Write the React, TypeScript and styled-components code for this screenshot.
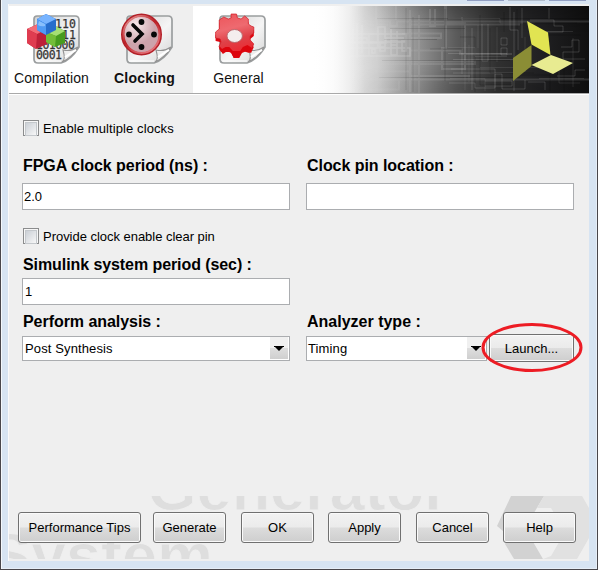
import React from "react";
import styled, { createGlobalStyle } from "styled-components";

const GlobalStyle = createGlobalStyle`
  * { box-sizing: border-box; }
  body { margin: 0; overflow: hidden; background: #d7e4f2; }
`;

const Window = styled.div`
  width: 598px;
  height: 570px;
  display: flex;
  flex-direction: column;
  padding: 4px 8px 8px 7px;
  border: 1px solid #49474b;
  border-top: 0;
  background: #d7e4f2;
  box-shadow: inset 1px 0 #f4f8fc, inset -1px -1px #e6eef7;
  font-family: "Liberation Sans", Arial, sans-serif;
  font-size: 13px;
  color: #000;
  position: relative;
`;

const CaptionButtons = styled.div`
  position: absolute;
  top: 0;
  left: 466px;
  display: flex;
  gap: 4px;
`;
const CaptionEdge = styled.i<{ $tone: string }>`
  width: 37px;
  height: 1px;
  background: ${(p) => p.$tone};
`;

const Client = styled.div`
  flex: 1;
  display: flex;
  flex-direction: column;
  min-height: 0;
  background: #efefef;
  border-left: 1px solid #fafafa;
  overflow: hidden;
`;

const Header = styled.header`
  height: 89px;
  margin-top: 2px;
  flex: none;
  display: flex;
  background: #fff;
  position: relative;
`;
const Tabs = styled.nav`
  display: flex;
  height: 87px;
`;
const Tab = styled.div<{ $width: number; $active?: boolean }>`
  width: ${(p) => p.$width}px;
  height: 87px;
  display: flex;
  flex-direction: column;
  align-items: center;
  padding-top: 7px;
  font-size: 14px;
  line-height: 16px;
  font-weight: ${(p) => (p.$active ? 700 : 400)};
  letter-spacing: ${(p) => (p.$active ? "0.25px" : "0.1px")};
  background: ${(p) => (p.$active ? "#efefef" : "#fff")};
  color: #111;
`;
const TabLabel = styled.span<{ $shift?: number }>`
  margin-right: ${(p) => p.$shift ?? 0}px;
`;
const TabIcon = styled.svg`
  width: 56px;
  height: 54px;
  margin-bottom: 3px;
  overflow: visible;
`;
const BitText = styled.text`
  font: 11.5px "DejaVu Sans Mono", monospace;
  fill: #343434;
  stroke: #343434;
  stroke-width: 0.25px;
`;
const Banner = styled.svg`
  flex: none;
  width: 278px;
  height: 87px;
  margin-left: 26px;
`;
const HeaderRule = styled.div`
  position: absolute;
  left: 0;
  right: 0;
  bottom: 1px;
  height: 1px;
  background: #a9a9a9;
`;

const Form = styled.main`
  flex: none;
  height: 401px;
  display: flex;
  flex-direction: column;
  padding: 25px 15px 0 13px;
`;
const CheckRow = styled.label`
  height: 16px;
  display: flex;
  align-items: center;
  gap: 4px;
  padding-left: 1px;
  line-height: 16px;
`;
const CheckText = styled.span<{ $spacing?: number }>`
  padding-top: 2px;
  letter-spacing: ${(p) => p.$spacing ?? 0}px;
`;
const CheckBox = styled.span`
  width: 16px;
  height: 16px;
  padding: 1px;
  border: 1px solid #8b8c8d;
  background: #f7f7f7;
  &::before {
    content: "";
    display: block;
    height: 12px;
    border: 1px solid #c4c8cc;
    background: linear-gradient(135deg, #cbd0d6, #f7f7f7);
  }
`;
const Fields = styled.div<{ $top: number }>`
  display: grid;
  grid-template-columns: 268px 268px;
  column-gap: 16px;
  margin-top: ${(p) => p.$top}px;
`;
const Field = styled.div<{ $gap: number }>`
  display: flex;
  flex-direction: column;
  gap: ${(p) => p.$gap}px;
`;
const FieldLabel = styled.div<{ $spacing?: number }>`
  height: 18px;
  padding-left: 1px;
  font-size: 16px;
  line-height: 18px;
  font-weight: 700;
  letter-spacing: ${(p) => p.$spacing ?? -0.05}px;
  white-space: nowrap;
`;
const TextBox = styled.div<{ $indent?: number }>`
  height: 27px;
  border: 1px solid #abadb0;
  background: #fff;
  padding-left: ${(p) => p.$indent ?? 1}px;
  line-height: 26px;
`;
const SelectRow = styled.div`
  display: flex;
  align-items: center;
  height: 28px;
  gap: 2px;
`;
const Select = styled.div<{ $width: number; $narrow?: boolean }>`
  width: ${(p) => p.$width}px;
  height: 25px;
  display: flex;
  align-items: center;
  justify-content: space-between;
  padding: 0 1px 0 ${(p) => (p.$narrow ? 1 : 2)}px;
  border: 1px solid #abadb0;
  background: #fff;
  line-height: 23px;
  letter-spacing: 0.12px;
`;
const SelectArrow = styled.svg`
  width: 18px;
  height: 22px;
  background: linear-gradient(#f0f0f0 0 50%, #dedede 51%, #cfcfcf);
`;

const Button = styled.button<{ $width: number; $height: number }>`
  flex: none;
  width: ${(p) => p.$width}px;
  height: ${(p) => p.$height}px;
  padding: ${(p) => (p.$height < 30 ? "1px 0 0" : "0 0 1px")};
  border: 1px solid #707070;
  border-radius: 3px;
  background: linear-gradient(#f2f2f2 0, #ebebeb 48%, #dcdcdc 52%, #cecece 100%);
  box-shadow: inset 0 0 0 1px #fafafa;
  font: 13px "Liberation Sans", Arial, sans-serif;
  color: #000;
  white-space: nowrap;
`;

const Footer = styled.footer`
  flex: 1;
  position: relative;
  display: flex;
  align-items: flex-start;
  padding: 16px 0 0 9px;
  overflow: hidden;
`;
const Watermark = styled.svg`
  position: absolute;
  left: 0;
  top: 0;
  width: 580px;
  height: 63px;
`;
const WatermarkText = styled.text`
  font: 700 63px "Liberation Sans", Arial, sans-serif;
  fill: #dedede;
  stroke: #efefef;
  stroke-width: 0.8px;
`;
const Actions = styled.div`
  position: relative;
  display: grid;
  grid-template-columns: 123px 73px 73px 73px 73px 73px;
  column-gap: 14px;
  & > :nth-child(2) { margin-left: -2px; }
  & > :nth-child(3) { margin-left: -1px; }
  & > :nth-child(4) { margin-left: -1px; }
`;
const Highlight = styled.svg`
  position: absolute;
  left: 479px;
  top: 321px;
  width: 104px;
  height: 53px;
`;

function Page({ id }: { id: string }) {
  return (
    <>
      <defs>
        <linearGradient id={id} x1="0" y1="0" x2="1" y2="1">
          <stop stopColor="#d0d0d0" />
          <stop offset=".55" stopColor="#f5f5f5" />
          <stop offset="1" stopColor="#d2d2d2" />
        </linearGradient>
      </defs>
      <path d="M11 3H49Q53 3 53 7V34Q45 47 35 50H12Q8 50 8 46V6Q8 3 11 3Z" fill={`url(#${id})`} stroke="#9b9e9f" strokeWidth="1.7" />
      <path d="M10 48H35" stroke="#fff" />
      <path d="M36 49Q40 47 37 37Q45 39 52 34Q47 44 36 49Z" fill="#eee" stroke="#929292" strokeWidth="1.1" />
      <path d="M39 44L50 37" stroke="#fff" strokeWidth="2" />
    </>
  );
}

function CompilationIcon() {
  return (
    <TabIcon viewBox="1 0 56 54">
      <Page id="page-bits" />
      <BitText x="29" y="15">110</BitText>
      <BitText x="36" y="26">11</BitText>
      <BitText x="10" y="36" textLength="39">101000</BitText>
      <BitText x="10" y="46" textLength="26">0001</BitText>
      <path d="M1 16L12 11L21 16V31L10 36L1 30Z" fill="#bd2038" />
      <path d="M1 16L12 11L21 16L11 21Z" fill="#f36c77" />
      <path d="M1 16L11 21L10 36L1 30Z" fill="#df3c50" />
      <path d="M20 19L29 13L39 18V30L29 34L20 29Z" fill="#479c1f" />
      <path d="M20 19L29 13L39 18L30 23Z" fill="#a5df74" />
      <path d="M20 19L30 23L29 34L20 29Z" fill="#73bd39" />
      <path d="M11 6L20 1L30 6V17L20 22L11 17Z" fill="#276dcc" />
      <path d="M11 6L20 1L30 6L20 11Z" fill="#78b4ff" />
      <path d="M11 6L20 11V22L11 17Z" fill="#519bf4" />
      <path d="M13 8L19 11V13Q15 14 12 12Z" fill="#a1ceff" opacity=".7" />
    </TabIcon>
  );
}

function ClockIcon() {
  return (
    <TabIcon viewBox="0 0 56 54">
      <defs>
        <radialGradient id="dial" cx=".35" cy=".25">
          <stop stopColor="#f8e9eb" />
          <stop offset="1" stopColor="#cda3ab" />
        </radialGradient>
        <linearGradient id="rim" x1="0" y1="0" x2=".7" y2="1">
          <stop stopColor="#eca9a8" />
          <stop offset=".5" stopColor="#bd2026" />
          <stop offset="1" stopColor="#e6767d" />
        </linearGradient>
      </defs>
      <Page id="page-clock" />
      <ellipse cx="22.5" cy="21.5" rx="19" ry="19.5" fill="url(#dial)" stroke="#b32028" strokeWidth="3" />
      <ellipse cx="22.5" cy="21.5" rx="18" ry="18.5" fill="none" stroke="url(#rim)" strokeWidth="2" />
      <path d="M14 12L23 21L16 28" fill="none" stroke="#080808" strokeWidth="3.6" strokeLinecap="round" />
      <g fill="#080808">
        <circle cx="22.5" cy="9" r="2.9" /><circle cx="35" cy="21.5" r="2.9" />
        <circle cx="22.5" cy="34" r="2.9" /><circle cx="10" cy="21.5" r="2.9" />
      </g>
    </TabIcon>
  );
}

const gearOutline =
  "M17 1H23L24 5L28 6L32 3L36 6L36 11L39 13L42 14V20L38 23L38 27L42 31L39 37L34 35L29 37L26 42H20L17 37L13 35L8 38L4 33L6 29L5 26L0 25V19L4 16L4 12L4 7L9 4L14 6L17 5Z";

function GearIcon() {
  return (
    <TabIcon viewBox="0 0 56 54">
      <defs>
        <linearGradient id="gear" x1="0" y1="0" x2=".25" y2="1">
          <stop stopColor="#ed5359" />
          <stop offset=".42" stopColor="#ee6a70" />
          <stop offset=".7" stopColor="#df4148" />
          <stop offset="1" stopColor="#e92c34" />
        </linearGradient>
      </defs>
      <g transform="translate(1 0)"><Page id="page-gear" /></g>
      <g transform="translate(5.5 1) scale(.91 1)">
        <path transform="translate(-1 2)" d={gearOutline} fill="#df0710" />
        <path transform="translate(-1 -1)" d={gearOutline} fill="url(#gear)" stroke="#cf1720" strokeWidth=".7" />
        <path d="M2 32L6 35L10 33L14 33L18 37H26L29 33L34 31L39 34L36 39L29 37L24 43L19 44L16 38L5 38Z" fill="#dc040d" />
        <ellipse cx="20" cy="22" rx="8.5" ry="6.5" fill="#f4eeee" stroke="#b9666a" />
      </g>
    </TabIcon>
  );
}

function CircuitBanner() {
  return (
    <Banner viewBox="311 6 278 87">
      <defs>
        <linearGradient id="fade">
          <stop stopColor="#fff" /><stop offset=".08" stopColor="#f5f5f5" />
          <stop offset=".24" stopColor="#cfcfcf" /><stop offset=".4" stopColor="#8c8c8c" />
          <stop offset=".52" stopColor="#5c5c5c" /><stop offset=".67" stopColor="#303030" />
          <stop offset=".83" stopColor="#202022" /><stop offset="1" stopColor="#101010" />
        </linearGradient>
        <linearGradient id="edge" x1="0" y1="0" x2="0" y2="1">
          <stop stopColor="#000" stopOpacity=".24" /><stop offset=".3" stopColor="#000" stopOpacity="0" />
          <stop offset=".7" stopColor="#000" stopOpacity="0" /><stop offset="1" stopColor="#000" stopOpacity=".12" />
        </linearGradient>
        <linearGradient id="edge-ramp" gradientUnits="userSpaceOnUse" x1="350" x2="440">
          <stop stopColor="#000" /><stop offset="1" stopColor="#fff" />
        </linearGradient>
        <mask id="edge-mask" maskUnits="userSpaceOnUse" x="311" y="6" width="278" height="87">
          <path d="M311 6H589V93H311Z" fill="url(#edge-ramp)" />
        </mask>
        <linearGradient id="fade-start">
          <stop stopColor="#fff" /><stop offset="1" stopColor="#fff" stopOpacity="0" />
        </linearGradient>
      </defs>
      <path d="M311 6H589V93H311Z" fill="url(#fade)" />
      <g mask="url(#edge-mask)">
        <path d="M340 6H589V93H340Z" fill="url(#edge)" />
        <g fill="none" stroke="#ddd" strokeOpacity=".15">
          <path d="M343 21.5H390V26H397V21.5H589M343 24.5H388M410 24.5H520M340 61.5H373V64H340M379 61.5H475V64H380M350 71.5H410V76H470M342 79.5H590M369 89.5H399V80M376 6V61M396 6V20M410 10V92M419 15V93M430 9V26H435V9M409 50.5H460V54H512M402 33.5H441V38H409M445 6V23H465V69H442V48H446V6" strokeWidth="2" />
        </g>
      </g>
      <g fill="none" stroke="#eee" strokeOpacity=".22">
        <path d="M345 34H406V42H345V48H410V56H349V60M350 38H367V43H386V38H404M353 29V43H373M357 23V58M362 25V53M369 33V56M378 27H385V47H378ZM391 29V55H397V31M402 41H406V51H402ZM380 43H385V51H380ZM391 40H397V45H391ZM372 49H375V53H372Z" strokeWidth="1.5" />
        <path strokeOpacity=".16" d="M448 53.5H507M453 59.5H517M451 69H495V73H453M462 17V74M472 28V90M482 24V61H488V24M501 38H507V45H501ZM501 48H507V55H501ZM449 83H475V88H495V74H502V89H525V80M485 81H512V86H485M510 7V30H518V50M514 12V91M522 8V38M530 20H554V26H563V32H538M549 8V19M561 47H572V40H579V52H563V59H585M557 76H575V70H585M528 82H545V90" />
      </g>
      <g mask="url(#edge-mask)" fill="none" stroke="#000" strokeOpacity=".17">
        <path d="M377 18.5H589M390 28.5H465M384 39.5H437M382 60.5H510M379 77.5H520M406 8V90M413 17V92M430 20H462V49H430M445 9V81M460 37H475V92M480 15V85H512M490 28V73H534M504 12V32M517 9V75H550M535 23H577M540 35H581M550 67V91M564 61V92" />
      </g>
      <g fill="none" stroke="#aaa" strokeOpacity=".16">
        <path d="M448 18.5H500V23H523M530 31.5H573M448 47.5H475V56.5H507M480 67.5H540M450 78.5H485V91M495 91V72.5H519M539 78.5H584M465 42V90M469 45V82M478 25V48M497 27V62M525 37V72M559 65V83H580M573 38V87" />
      </g>
      <path d="M311 6H365V93H311Z" fill="url(#fade-start)" />
      <path d="M527 21L548 32.5L550.5 55L531.5 44.5Z" fill="#e1e452" />
      <path d="M513 58L531.5 45V66L513 81Z" fill="#8b8d35" />
      <path d="M531.5 65L551 55L573 63L553 74Z" fill="#e8eb91" />
    </Banner>
  );
}

function Combo({ value, width }: { value: string; width: number }) {
  return (
    <Select $width={width} $narrow={width < 200}>
      {value}
      <SelectArrow viewBox="0 0 18 22"><path d="M4 9H14V10H13L9 14L5 10H4Z" /></SelectArrow>
    </Select>
  );
}

export default function App() {
  return (
    <>
      <GlobalStyle />
      <Window>
        <CaptionButtons>
          <CaptionEdge $tone="#929fc2" /><CaptionEdge $tone="#b1bccb" /><CaptionEdge $tone="#929fc2" />
        </CaptionButtons>
        <Client>
          <Header>
            <Tabs>
              <Tab $width={91}><CompilationIcon /><TabLabel $shift={6}>Compilation</TabLabel></Tab>
              <Tab $width={93} $active><ClockIcon /><TabLabel $shift={4}>Clocking</TabLabel></Tab>
              <Tab $width={92}><GearIcon /><TabLabel $shift={1}>General</TabLabel></Tab>
            </Tabs>
            <CircuitBanner />
            <HeaderRule />
          </Header>
          <Form>
            <CheckRow><CheckBox /><CheckText $spacing={0.1}>Enable multiple clocks</CheckText></CheckRow>
            <Fields $top={21}>
              <Field $gap={8}><FieldLabel>FPGA clock period (ns) :</FieldLabel><TextBox>2.0</TextBox></Field>
              <Field $gap={8}><FieldLabel>Clock pin location :</FieldLabel><TextBox /></Field>
            </Fields>
            <Fields $top={18}><CheckRow><CheckBox /><CheckText $spacing={-0.03}>Provide clock enable clear pin</CheckText></CheckRow></Fields>
            <Fields $top={12}>
              <Field $gap={4}><FieldLabel $spacing={-0.08}>Simulink system period (sec) :</FieldLabel><TextBox $indent={2}>1</TextBox></Field>
            </Fields>
            <Fields $top={8}>
              <Field $gap={3}>
                <FieldLabel>Perform analysis :</FieldLabel>
                <SelectRow><Combo value="Post Synthesis" width={268} /></SelectRow>
              </Field>
              <Field $gap={3}>
                <FieldLabel $spacing={0}>Analyzer type :</FieldLabel>
                <SelectRow><Combo value="Timing" width={181} /><Button $width={85} $height={28}>Launch...</Button></SelectRow>
              </Field>
            </Fields>
          </Form>
          <Footer>
            <Watermark viewBox="0 0 580 63">
              <WatermarkText x="138.6" y="14">Generator</WatermarkText>
              <WatermarkText x="-20" y="81">System</WatermarkText>
              <path d="M502 0H535L516 32L534 63H505L496 48L500 40L488 30Z" fill="#d2d2d2" />
              <path d="M535 0H573L580 12V42L568 63H534L542 60L556 36L542 12H528Z" fill="#e1e1e1" />
            </Watermark>
            <Actions>
              <Button $width={123} $height={31}>Performance Tips</Button>
              <Button $width={73} $height={31}>Generate</Button>
              <Button $width={73} $height={31}>OK</Button>
              <Button $width={73} $height={31}>Apply</Button>
              <Button $width={73} $height={31}>Cancel</Button>
              <Button $width={73} $height={31}>Help</Button>
            </Actions>
          </Footer>
        </Client>
        <Highlight viewBox="0 0 104 53"><ellipse cx="52" cy="26.5" rx="49" ry="23" fill="none" stroke="#ed1c24" strokeWidth="3" /></Highlight>
      </Window>
    </>
  );
}
